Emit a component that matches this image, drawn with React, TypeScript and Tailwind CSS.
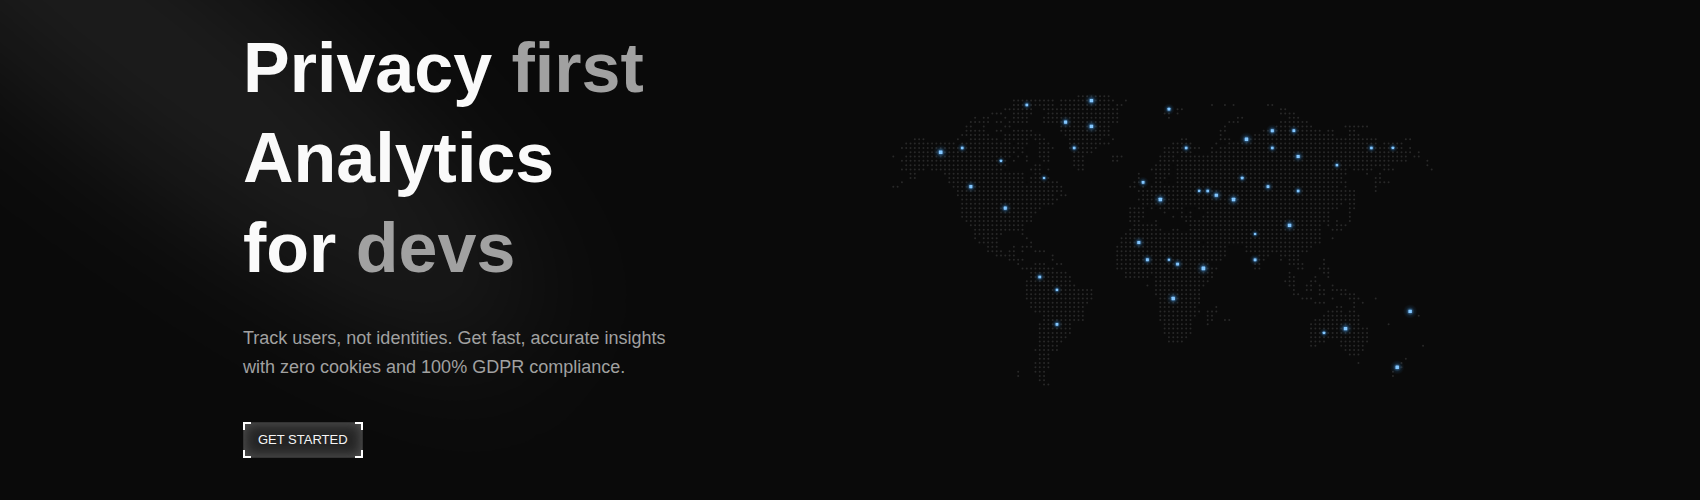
import React from "react";

const PITCH_X = 4.307;
const PITCH_Y = 4.302;
const ORIGIN_X = 19.3;
const ORIGIN_Y = 15.3;

/* Land mass, one entry per row: single columns or inclusive column ranges. */
const LAND: string[] = [
  "43-50",
  "28-37 39-51 54",
  "28-37 39-50 52-53 74 77 79 87-88",
  "26-32 35-52 64 66-67 90-91",
  "23-25 28-32 36-52 63-64 66 90-93",
  "19 21-22 26 28-31 35-52 64 80-81 92-94",
  "18-22 24-25 27-31 35-52 78-80 90-96",
  "17-18 21 26-27 39-50 77 89-97 105-110",
  "17-21 24-25 28-32 39-50 76-77 86-99 101-102 106-107",
  "16-22 26-34 40-50 76 84-102 106-108",
  "5-7 15 18-24 26-31 33-35 41-48 51 67-68 76-78 82-112 119-120",
  "3-14 16-27 29-31 34-36 41-50 65-69 75 78-112 114-118",
  "2-30 34-37 41-47 63-71 74 76-118 120",
  "4-28 30 34-36 42-46 63-69 74-120 122",
  "0 3-27 29 31 34-36 42-44 51-53 62-65 67-119 121-122",
  "2-26 28 31 35-36 42-44 51-52 62-119 124",
  "3-26 33-34 42-44 61-64 66-115 124",
  "2-7 9-25 32-34 36 43-44 60-64 66-105 107-111 114-116 125",
  "4-5 12-30 33-34 57 61-64 66-105 110 113",
  "4-5 13-30 32-36 57 61-63 66-104 112-113",
  "2 13-30 32-38 56-57 61-62 66-105 112-115",
  "0-1 14-39 55-56 58 60-103 105 112",
  "15-39 57-107 112",
  "15-37 39-40 58-107",
  "16-38 57-107",
  "16-37 58-65 66-104 106-107",
  "16-34 55-58 60 62-67 71-103 106-107",
  "16-33 55-58 63 67 69 73-101 106",
  "16-32 55-58 65 67-69 72-101 106",
  "17-32 55-57 61 68-101 103 106",
  "18-30 56-61 69-99 101 103-105",
  "19-30 55-62 65-66 69-99 102-104",
  "19-25 30 54-99",
  "19 21-24 31 53-99 102",
  "20-24 32 53-71 73-99",
  "22-24 28 30-32 52-77 82-97",
  "22-25 27-28 30 33-35 52-77 82-96",
  "24-28 37 52-77 85-87 90-94",
  "27-30 37 52-76 84-86 90 92-94 100",
  "29 33-35 38-39 52-73 84-85 92-95 100",
  "30-37 52-75 84-85 94-95 99-101",
  "32-40 54-74 92 100-101",
  "32-41 54-59 61-74 92-93 98 101",
  "31-41 61-73 91-93 97-98",
  "31-42 59 61-72 92-93 96-97 99 102",
  "31-46 61-71 93 96-97 99-100 102-105",
  "31-46 61-71 93-94 99-100 104-107",
  "31-46 62-71 95-97 102 106-108 112",
  "32-45 62-71 98-100 107 109",
  "32-44 62-70 75 103-104 107",
  "33-44 62-71 73-75 101-104 106-107",
  "35-44 62-70 73-74 100-108 122",
  "35-44 62-69 73-74 77-78 98-108",
  "34-41 63-69 73 97-108 115",
  "34-41 63-69 97-110",
  "34-41 63-69 97-110",
  "34-40 64-68 97-110",
  "34-39 64-67 97-100 104-110",
  "34-38 97-98 104-109 123",
  "33-38 105-109",
  "34-36 106-108",
  "34-36 119",
  "33-36 108 118",
  "33-36 117-118",
  "29 33-35 116",
  "29 34-35 116",
  "34-35",
  "35-36",
];

/* Active visitors: column, row, half the marker's side. */
const VISITORS: [number, number, number][] = [
  [31, 2, 1.4], [40, 6, 1.7], [16, 12, 1.4], [11, 13, 2], [25, 15, 1.2],
  [35, 19, 1.2], [18, 21, 1.7], [26, 26, 1.7], [46, 1, 1.9], [46, 7, 1.9],
  [42, 12, 1.4], [64, 3, 1.5], [68, 12, 1.4], [82, 10, 1.9], [58, 20, 1.5],
  [62, 24, 1.9], [71, 22, 1.2], [73, 22, 1.4], [75, 23, 1.8], [79, 24, 1.9],
  [81, 19, 1.4], [88, 8, 1.7], [93, 8, 1.5], [88, 12, 1.4], [94, 14, 1.7],
  [111, 12, 1.4], [116, 12, 1.3], [103, 16, 1.3], [87, 21, 1.5],
  [94, 22, 1.4], [92, 30, 1.9], [84, 32, 1.2], [57, 34, 1.7],
  [59, 38, 1.6], [64, 38, 1.2], [66, 39, 1.6], [72, 40, 2],
  [65, 47, 1.9], [84, 38, 1.5], [34, 42, 1.5], [38, 45, 1.3],
  [38, 53, 1.5], [120, 50, 1.9], [105, 54, 1.9], [100, 55, 1.3],
  [117, 63, 1.9],
];

function expand(row: string): number[] {
  return row.split(" ").flatMap((part) => {
    const [from, to = from] = part.split("-").map(Number);
    return Array.from({ length: to - from + 1 }, (_, i) => from + i);
  });
}

function WorldMap() {
  return (
    <svg viewBox="0 0 583 320" className="w-full" role="img" aria-label="World map of visitors">
      <defs>
        <radialGradient id="glow">
          <stop offset="0" stopColor="#60a5fa" stopOpacity="0.8" />
          <stop offset="0.3" stopColor="#4a92d4" stopOpacity="0.5" />
          <stop offset="0.6" stopColor="#2b6ca3" stopOpacity="0.16" />
          <stop offset="1" stopColor="#2b6ca3" stopOpacity="0" />
        </radialGradient>
      </defs>
      <g fill="#292929">
        {LAND.flatMap((row, r) =>
          expand(row).map((c) => (
            <circle
              key={`${c}-${r}`}
              cx={ORIGIN_X + c * PITCH_X}
              cy={ORIGIN_Y + r * PITCH_Y}
              r="1"
            />
          )),
        )}
      </g>
      {VISITORS.map(([c, r, size]) => {
        const x = ORIGIN_X + c * PITCH_X;
        const y = ORIGIN_Y + r * PITCH_Y;
        return (
          <g key={`${c}-${r}`}>
            <circle cx={x} cy={y} r={size * 3.8} fill="url(#glow)" />
            <rect
              x={x - size * 0.9}
              y={y - size * 0.9}
              width={size * 1.8}
              height={size * 1.8}
              rx="0.4"
              fill="#85c8ff"
            />
          </g>
        );
      })}
    </svg>
  );
}

function Spotlight() {
  return (
    <svg
      aria-hidden="true"
      viewBox="0 0 800 600"
      className="pointer-events-none absolute top-0 left-0 w-[800px]"
    >
      <defs>
        <filter id="soft" x="-50%" y="-200%" width="200%" height="500%">
          <feGaussianBlur stdDeviation="62" />
        </filter>
      </defs>
      <g transform="rotate(38 130 30)">
        <ellipse
          cx="130"
          cy="30"
          rx="500"
          ry="104"
          fill="#ffffff"
          fillOpacity="0.078"
          filter="url(#soft)"
        />
      </g>
    </svg>
  );
}

function GetStarted() {
  return (
    <button
      type="button"
      className="relative mt-10 flex h-9 cursor-pointer items-center border border-[#333333] bg-[#242424] px-[14px] text-[13px] text-neutral-100 shadow-[inset_0_0_14px_#5c5c5c]"
    >
      GET STARTED
      <span className="absolute -top-px -left-px size-2 border-t-2 border-l-2 border-white" />
      <span className="absolute -top-px -right-px size-2 border-t-2 border-r-2 border-white" />
      <span className="absolute -bottom-px -left-px size-2 border-b-2 border-l-2 border-white" />
      <span className="absolute -right-px -bottom-px size-2 border-r-2 border-b-2 border-white" />
    </button>
  );
}

export default function App() {
  return (
    <main className="relative min-h-screen overflow-hidden bg-[#0a0a0a] font-['Liberation_Sans',Arial,sans-serif]">
      <Spotlight />
      <section className="relative mx-auto grid max-w-[1214px] grid-cols-2 items-center gap-12 pt-[23px]">
        <div className="flex flex-col items-start">
          <h1 className="text-[70px] leading-[90px] font-semibold text-neutral-50">
            Privacy <span className="text-[#a1a1a1]">first</span>
            <br />
            Analytics
            <br />
            for <span className="text-[#a1a1a1]">devs</span>
          </h1>
          <p className="mt-[31px] text-[18px] leading-[29px] text-[#a1a1a1]">
            Track users, not identities. Get fast, accurate insights
            <br />
            with zero cookies and 100% GDPR compliance.
          </p>
          <GetStarted />
        </div>
        <WorldMap />
      </section>
    </main>
  );
}
